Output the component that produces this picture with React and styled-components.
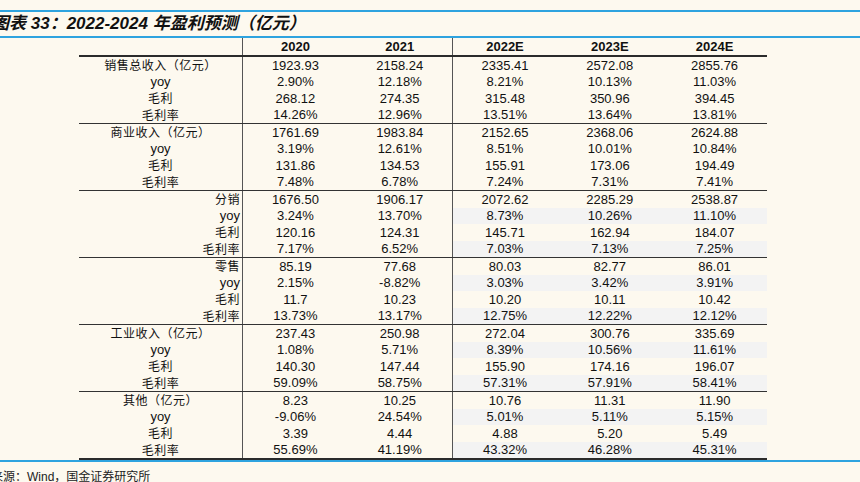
import React from "react";
import styled, { createGlobalStyle } from "styled-components";

const GlobalStyle = createGlobalStyle`
  html, body {
    margin: 0;
    padding: 0;
    background: #fdf9ef;
  }
  * {
    box-sizing: border-box;
  }
`;

const Page = styled.div`
  width: 860px;
  height: 482px;
  overflow: hidden;
  background: #fdf9ef;
  padding-top: 10px;
  color: #111;
  font-family: "Liberation Sans", "Noto Sans CJK SC", sans-serif;
`;

const BlueRule = styled.div`
  height: 2px;
  background: #2ea3df;
`;

const Title = styled.div`
  height: 24px;
  line-height: 24px;
  margin-left: -8px;
  font-size: 17px;
  font-weight: bold;
  font-style: italic;
  white-space: nowrap;
`;

const Table = styled.div`
  width: 688px;
  margin-left: 79px;
  border-bottom: 2px solid #2b2b2b;
`;

const Row = styled.div`
  display: grid;
  grid-template-columns: 164px repeat(5, 1fr);
  height: ${(p) => (p.$head ? "19px" : "16.5px")};
  border-bottom: ${(p) => (p.$head ? "2px solid #2b2b2b" : "none")};
`;

const Section = styled.div`
  border-top: ${(p) => (p.$first ? "none" : "1px solid #333")};
`;

const LabelCell = styled.div`
  border-right: 1px solid #555;
  display: flex;
  align-items: center;
  justify-content: ${(p) => (p.$right ? "flex-end" : "center")};
  padding-right: ${(p) => (p.$right ? "2px" : "0")};
  font-family: ${(p) =>
    p.$latin
      ? `"Liberation Sans", sans-serif`
      : `"Noto Sans CJK SC", sans-serif`};
  font-size: ${(p) => (p.$latin ? "13px" : "12px")};
  letter-spacing: ${(p) => (p.$latin ? "0" : "0.5px")};
  line-height: 1;
  white-space: nowrap;
`;

const Cell = styled.div`
  display: flex;
  align-items: center;
  justify-content: center;
  font-size: 13px;
  font-weight: ${(p) => (p.$bold ? "bold" : "normal")};
  line-height: 1;
  background: ${(p) => (p.$shade ? "#f3f3f3" : "transparent")};
  border-right: ${(p) => (p.$divider ? "1px solid #555" : "none")};
`;

const Source = styled.div`
  margin-left: -9px;
  margin-top: 5px;
  font-size: 12px;
  color: #222;
  white-space: nowrap;
`;

const years = ["2020", "2021", "2022E", "2023E", "2024E"];
const subLabels = [null, "yoy", "毛利", "毛利率"];

const sections = [
  {
    label: "销售总收入（亿元）",
    rows: [
      ["1923.93", "2158.24", "2335.41", "2572.08", "2855.76"],
      ["2.90%", "12.18%", "8.21%", "10.13%", "11.03%"],
      ["268.12", "274.35", "315.48", "350.96", "394.45"],
      ["14.26%", "12.96%", "13.51%", "13.64%", "13.81%"],
    ],
  },
  {
    label: "商业收入（亿元）",
    rows: [
      ["1761.69", "1983.84", "2152.65", "2368.06", "2624.88"],
      ["3.19%", "12.61%", "8.51%", "10.01%", "10.84%"],
      ["131.86", "134.53", "155.91", "173.06", "194.49"],
      ["7.48%", "6.78%", "7.24%", "7.31%", "7.41%"],
    ],
  },
  {
    label: "分销",
    right: true,
    shade: true,
    rows: [
      ["1676.50", "1906.17", "2072.62", "2285.29", "2538.87"],
      ["3.24%", "13.70%", "8.73%", "10.26%", "11.10%"],
      ["120.16", "124.31", "145.71", "162.94", "184.07"],
      ["7.17%", "6.52%", "7.03%", "7.13%", "7.25%"],
    ],
  },
  {
    label: "零售",
    right: true,
    shade: true,
    rows: [
      ["85.19", "77.68", "80.03", "82.77", "86.01"],
      ["2.15%", "-8.82%", "3.03%", "3.42%", "3.91%"],
      ["11.7", "10.23", "10.20", "10.11", "10.42"],
      ["13.73%", "13.17%", "12.75%", "12.22%", "12.12%"],
    ],
  },
  {
    label: "工业收入（亿元）",
    shade: true,
    rows: [
      ["237.43", "250.98", "272.04", "300.76", "335.69"],
      ["1.08%", "5.71%", "8.39%", "10.56%", "11.61%"],
      ["140.30", "147.44", "155.90", "174.16", "196.07"],
      ["59.09%", "58.75%", "57.31%", "57.91%", "58.41%"],
    ],
  },
  {
    label: "其他（亿元）",
    shade: true,
    rows: [
      ["8.23", "10.25", "10.76", "11.31", "11.90"],
      ["-9.06%", "24.54%", "5.01%", "5.11%", "5.15%"],
      ["3.39", "4.44", "4.88", "5.20", "5.49"],
      ["55.69%", "41.19%", "43.32%", "46.28%", "45.31%"],
    ],
  },
];

const App = () => {
  return (
    <Page>
      <GlobalStyle />
      <BlueRule />
      <Title>图表 33：2022-2024 年盈利预测（亿元）</Title>
      <BlueRule />
      <Table>
        <Row $head>
          <LabelCell />
          {years.map((y, i) => (
            <Cell key={y} $bold $divider={i === 1}>
              {y}
            </Cell>
          ))}
        </Row>
        {sections.map((sec, si) => (
          <Section key={sec.label} $first={si === 0}>
            {sec.rows.map((vals, ri) => {
              const label = ri === 0 ? sec.label : subLabels[ri];
              return (
                <Row key={ri}>
                  <LabelCell $right={sec.right} $latin={label === "yoy"}>
                    {label}
                  </LabelCell>
                  {vals.map((v, ci) => (
                    <Cell
                      key={ci}
                      $divider={ci === 1}
                      $shade={sec.shade && ci >= 2 && ri % 2 === 1}
                    >
                      {v}
                    </Cell>
                  ))}
                </Row>
              );
            })}
          </Section>
        ))}
      </Table>
      <BlueRule />
      <Source>来源：Wind，国金证券研究所</Source>
    </Page>
  );
};

export default App;
